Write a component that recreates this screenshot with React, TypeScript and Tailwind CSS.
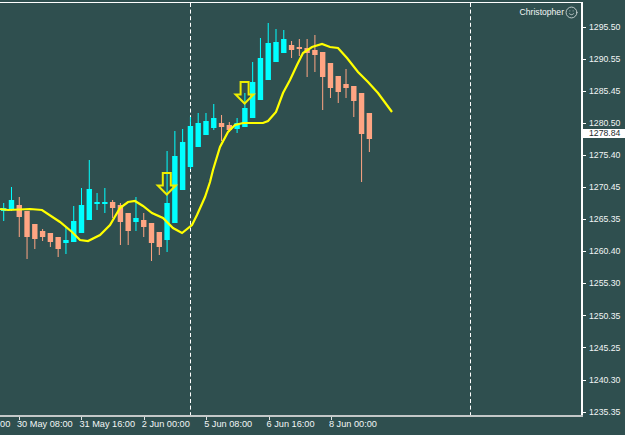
import React from 'react';
import { Smile } from 'lucide-react';

const UP = '#00ffff';
const DOWN = '#ffa583';

// top of body, bottom of body, wick top, wick bottom, rising?
const candles: [number, number, number, number, boolean][] = [
  [208, 211, 203, 221, true], [200, 209, 187, 211, true], [205, 217, 197, 237, false], [211, 237, 211, 259, false],
  [224, 239, 224, 249, false], [231, 237, 229, 241, false], [233, 242, 233, 247, false], [237, 249, 237, 257, false],
  [240, 243, 227, 254, true], [221, 242, 206, 242, true], [205, 233, 188, 233, true], [189, 220, 160, 220, true],
  [202, 204, 193, 210, true], [202, 204, 188, 213, true], [202, 208, 200, 218, false], [205, 222, 203, 245, false],
  [213, 231, 213, 245, false], [218, 222, 197, 231, true], [220, 227, 213, 237, false], [223, 243, 223, 261, false],
  [232, 247, 232, 255, false], [203, 240, 151, 252, true], [156, 223, 131, 223, true], [142, 190, 129, 190, true],
  [126, 167, 117, 169, true], [123, 147, 113, 147, true], [121, 135, 113, 135, true], [118, 128, 104, 130, true],
  [123, 127, 115, 141, false], [125, 130, 122, 132, false], [123, 129, 118, 133, true], [108, 127, 93, 127, true],
  [82, 118, 62, 118, true], [58, 100, 38, 100, true], [43, 80, 23, 80, true], [42, 62, 29, 62, true],
  [39, 53, 30, 53, true], [45, 50, 41, 58, false], [47, 49, 39, 56, false], [48, 53, 39, 77, false],
  [50, 55, 35, 72, false], [52, 77, 52, 110, false], [63, 88, 63, 98, false], [76, 92, 76, 103, false],
  [84, 88, 69, 98, false], [86, 101, 86, 117, false], [93, 134, 93, 182, false], [113, 139, 113, 152, false],
];

const maLine =
  '0,209 8,210 30,209 42,210 60,222 72,232 80,240 88,241 100,235 110,225 120,208 128,202 135,201 143,206 152,213 163,218 173,228 182,233 192,225 197,215 205,197 210,182 213,170 220,147 228,132 235,125 243,123 263,123 268,121 276,112 283,93 290,80 297,65 303,53 312,47 322,44 330,47 338,48 347,58 358,72 368,82 378,93 392,112';

const prices = ['1295.50', '1290.55', '1285.45', '1280.50', '1275.40', '1270.45', '1265.35', '1260.40', '1255.30', '1250.35', '1245.25', '1240.30', '1235.35'];
const times = ['29 May 00:00', '30 May 08:00', '31 May 16:00', '2 Jun 00:00', '5 Jun 08:00', '6 Jun 16:00', '8 Jun 00:00'];

function Arrow({ x, y }: { x: number; y: number }) {
  return (
    <path
      d={`M${x - 4} ${y}h8v12.5h5l-9 9l-9 -9h5z`}
      fill="none"
      stroke="#eeee00"
      strokeWidth="2"
    />
  );
}

export default function App() {
  return (
    <div className="w-[625px] h-[435px] overflow-hidden bg-[#2f4f4f] pt-[2px] text-[#f2f6f6] text-[8.7px] leading-none font-['Liberation_Sans',Arial,sans-serif]">
      <div className="flex h-[413px]">
        {/* chart */}
        <div className="relative w-[583px] border-t border-r-2 border-white">
          <svg width="581" height="412" viewBox="0 3 581 412" className="block">
            <line x1="190.5" y1="3" x2="190.5" y2="415" stroke="#fff" strokeDasharray="4 2.6" />
            <line x1="470.5" y1="3" x2="470.5" y2="415" stroke="#fff" strokeDasharray="4 2.6" />
            {candles.map(([top, bottom, wickTop, wickBottom, up], i) => {
              const x = 3.7 + i * 7.78;
              const color = up ? UP : DOWN;
              return (
                <g key={i} fill={color}>
                  <rect x={x - 0.5} y={wickTop} width="1" height={wickBottom - wickTop} />
                  <rect x={x - 2.7} y={top} width="5.4" height={bottom - top} />
                </g>
              );
            })}
            <polyline points={maLine} fill="none" stroke="#ffff00" strokeWidth="2.2" />
            <Arrow x={166.8} y={173} />
            <Arrow x={244.6} y={82} />
          </svg>
          <div className="absolute top-[3px] right-[3px] flex items-center gap-px text-[8.6px]">
            <span>Christopher</span>
            <Smile size={13} strokeWidth={1.7} className="text-[#c8d2d2]" />
          </div>
        </div>

        {/* price axis */}
        <div className="relative flex-1 pt-[9px]">
          {prices.map((p) => (
            <div key={p} className="flex h-[32.1px] items-center gap-[3px]">
              <span className="h-px w-[3px] bg-white" />
              <span>{p}</span>
            </div>
          ))}
          <div className="absolute left-0 right-0 top-[127px] h-[9px] bg-white pl-[6px] text-[#1c2c2c] leading-[9px]">1278.84</div>
        </div>
      </div>

      {/* time axis */}
      <div className="h-[20px] w-[583px] border-t-2 border-[#c4c8c8]">
        <div className="-ml-[43.4px] flex">
          {times.map((t) => (
            <div key={t} className="w-[62.4px] shrink-0">
              <span className="block h-[3px] w-px bg-[#e0e4e4]" />
              <span className="-ml-[2px] mt-0 block whitespace-nowrap text-[9.2px]">{t}</span>
            </div>
          ))}
        </div>
      </div>
    </div>
  );
}
